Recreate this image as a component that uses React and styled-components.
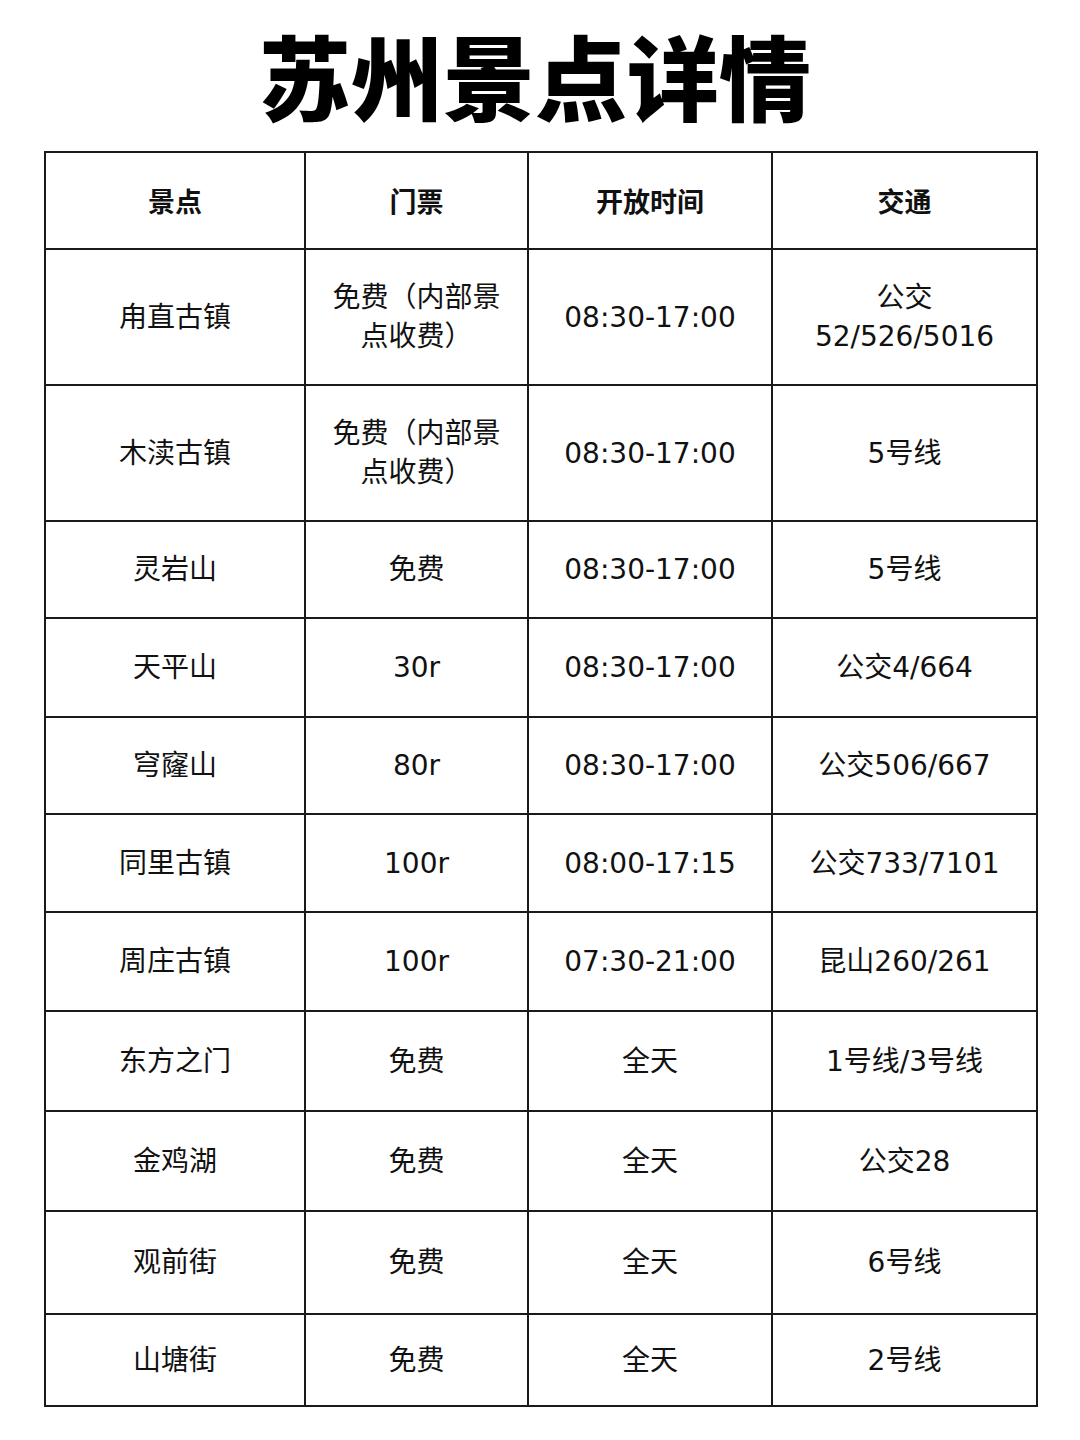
import React from "react";
import styled, { createGlobalStyle } from "styled-components";

const GlobalStyle = createGlobalStyle`
  html, body {
    margin: 0;
    padding: 0;
    background: #fff;
  }
  body {
    font-family: "DejaVu Sans", "Noto Sans CJK SC", sans-serif;
    color: #111;
  }
`;

const Page = styled.div`
  width: 1080px;
  height: 1440px;
  padding-top: 18px;
  box-sizing: border-box;
`;

const Title = styled.h1`
  margin: 0 0 22px;
  padding-right: 10px;
  text-align: center;
  font-family: "Noto Sans CJK SC", sans-serif;
  font-size: 92px;
  line-height: 111px;
  font-weight: 900;
  color: #000;
`;

const Table = styled.table`
  margin-left: 44px;
  width: 992px;
  table-layout: fixed;
  border-collapse: collapse;
  border: 2px solid #1a1a1a;
`;

const Row = styled.tr`
  height: ${(p) => p.$h}px;
`;

const HeadCell = styled.th`
  border: 2px solid #1a1a1a;
  font-family: "Noto Sans CJK SC", sans-serif;
  font-size: 27px;
  font-weight: 700;
  text-align: center;
  vertical-align: middle;
  padding: 0;
`;

const Cell = styled.td`
  border: 2px solid #1a1a1a;
  font-size: 28px;
  line-height: 39px;
  font-weight: 400;
  text-align: center;
  vertical-align: middle;
  padding: 0 20px;
`;

const cols = [260, 223, 244, 265];

const rows = [
  { h: 136, cells: ["甪直古镇", "免费（内部景点收费）", "08:30-17:00", "公交52/526/5016"] },
  { h: 136, cells: ["木渎古镇", "免费（内部景点收费）", "08:30-17:00", "5号线"] },
  { h: 97, cells: ["灵岩山", "免费", "08:30-17:00", "5号线"] },
  { h: 99, cells: ["天平山", "30r", "08:30-17:00", "公交4/664"] },
  { h: 97, cells: ["穹窿山", "80r", "08:30-17:00", "公交506/667"] },
  { h: 98, cells: ["同里古镇", "100r", "08:00-17:15", "公交733/7101"] },
  { h: 99, cells: ["周庄古镇", "100r", "07:30-21:00", "昆山260/261"] },
  { h: 100, cells: ["东方之门", "免费", "全天", "1号线/3号线"] },
  { h: 100, cells: ["金鸡湖", "免费", "全天", "公交28"] },
  { h: 103, cells: ["观前街", "免费", "全天", "6号线"] },
  { h: 92, cells: ["山塘街", "免费", "全天", "2号线"] },
];

const App = () => {
  return (
    <Page>
      <GlobalStyle />
      <Title>苏州景点详情</Title>
      <Table>
        <colgroup>
          {cols.map((w, i) => (
            <col key={i} style={{ width: w }} />
          ))}
        </colgroup>
        <thead>
          <Row $h={97}>
            <HeadCell>景点</HeadCell>
            <HeadCell>门票</HeadCell>
            <HeadCell>开放时间</HeadCell>
            <HeadCell>交通</HeadCell>
          </Row>
        </thead>
        <tbody>
          {rows.map((r, i) => (
            <Row key={i} $h={r.h}>
              {r.cells.map((c, j) => (
                <Cell key={j}>{c}</Cell>
              ))}
            </Row>
          ))}
        </tbody>
      </Table>
    </Page>
  );
};

export default App;
